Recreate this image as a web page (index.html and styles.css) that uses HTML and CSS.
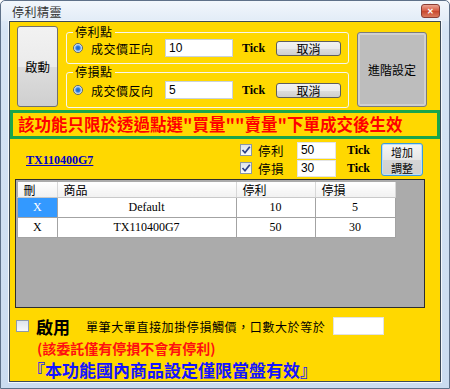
FILE: index.html
```
<!DOCTYPE html>
<html>
<head>
<meta charset="UTF-8">
<link rel="stylesheet" href="styles.css">
</head>
<body>
<div class="window">
	<div class="titlebar">
		<span class="title">停利精靈</span>
		<span class="close">&#x2715;</span>
	</div>
	<div class="client">
		<div class="top">
			<div class="btn btn-start">啟動</div>
			<div class="groups">
				<div class="group group-profit">
					<span class="legend">停利點</span>
					<span class="radio"></span>
					<span class="opt">成交價正向</span>
					<input class="box box-tick" type="text" value="10">
					<span class="tick">Tick</span>
					<div class="btn btn-cancel">取消</div>
				</div>
				<div class="group group-loss">
					<span class="legend">停損點</span>
					<span class="radio"></span>
					<span class="opt">成交價反向</span>
					<input class="box box-tick" type="text" value="5">
					<span class="tick">Tick</span>
					<div class="btn btn-cancel">取消</div>
				</div>
			</div>
			<div class="btn btn-adv">進階設定</div>
		</div>

		<div class="notice">該功能只限於透過點選"買量""賣量"下單成交後生效</div>

		<div class="adjust">
			<a class="prod" href="#">TX110400G7</a>
			<div class="checks">
				<div class="check-row">
					<span class="chk"><svg width="10" height="10" viewBox="0 0 10 10"><path d="M1.5 5 L4 7.8 L8.8 1.8" fill="none" stroke="#2b3f86" stroke-width="1.7"/></svg></span>
					<span class="chk-label">停利</span>
					<input class="box box-small" type="text" value="50">
					<span class="tick">Tick</span>
				</div>
				<div class="check-row">
					<span class="chk"><svg width="10" height="10" viewBox="0 0 10 10"><path d="M1.5 5 L4 7.8 L8.8 1.8" fill="none" stroke="#2b3f86" stroke-width="1.7"/></svg></span>
					<span class="chk-label">停損</span>
					<input class="box box-small" type="text" value="30">
					<span class="tick">Tick</span>
				</div>
			</div>
			<div class="btn btn-add"><span>增加</span><span>調整</span></div>
		</div>

		<div class="grid">
			<table>
				<tr>
					<th class="c-del">刪</th>
					<th class="c-prod">商品</th>
					<th class="c-num">停利</th>
					<th class="c-num2">停損</th>
				</tr>
				<tr>
					<td class="sel">X</td>
					<td>Default</td>
					<td>10</td>
					<td>5</td>
				</tr>
				<tr>
					<td>X</td>
					<td>TX110400G7</td>
					<td>50</td>
					<td>30</td>
				</tr>
			</table>
		</div>

		<div class="bottom">
			<div class="enable-row">
				<span class="chk chk-empty"></span>
				<span class="enable">啟用</span>
				<span class="enable-text">單筆大單直接加掛停損觸價，口數大於等於</span>
				<input class="box box-qty" type="text" value="">
			</div>
			<div class="warn">(該委託僅有停損不會有停利)</div>
			<div class="note">『本功能國內商品設定僅限當盤有效』</div>
		</div>
	</div>
</div>
</body>
</html>
```

FILE: styles.css
```
html, body {
	margin: 0;
	padding: 0;
	width: 450px;
	height: 389px;
	overflow: hidden;
	background: #ffffff;
}
body {
	font-family: "Noto Sans CJK TC", "Noto Sans", sans-serif;
	font-size: 12px;
	color: #000;
}
div.window {
	box-sizing: border-box;
	width: 450px;
	height: 389px;
	border: 1px solid #5e7189;
	border-radius: 5px 5px 0 0;
	background: linear-gradient(#e9f1fa, #d6e4f4 30px, #cbdcf0);
	display: flex;
	flex-direction: column;
}
div.titlebar {
	height: 20px;
	display: flex;
	align-items: center;
	padding-left: 11px;
	background: linear-gradient(#f2f7fc, #e2ecf7);
	border-radius: 5px 5px 0 0;
}
span.title {
	font-size: 12px;
	color: #333;
	letter-spacing: 0.5px;
}
span.close {
	margin-left: auto;
	margin-right: 9px;
	width: 17px;
	height: 12px;
	border: 1px solid #8a3d33;
	border-radius: 3px;
	background: linear-gradient(#eba493, #d5573e 50%, #c8452c 51%, #da7a5e);
	color: #fff;
	font-size: 8px;
	font-weight: bold;
	line-height: 12px;
	text-align: center;
}
div.client {
	box-sizing: border-box;
	margin: 0 8px;
	height: 361px;
	border: 1px solid #3d4a58;
	outline: 1px solid #f4f8fc;
	background: #ffd800;
	overflow: hidden;
}

/* top part */
div.top {
	display: flex;
	align-items: flex-start;
	height: 88px;
}
div.btn {
	box-sizing: border-box;
	border: 1px solid #707070;
	border-radius: 3px;
	background: linear-gradient(#f2f2f2, #ebebeb 50%, #dddddd 51%, #cfcfcf);
	display: flex;
	align-items: center;
	justify-content: center;
	text-align: center;
	font-size: 12px;
}
div.btn-start {
	margin: 4px 0 0 7px;
	width: 41px;
	height: 81px;
	font-size: 12.5px;
}
div.groups {
	margin-left: 8px;
	width: 283px;
	padding-top: 10px;
}
div.group {
	position: relative;
	box-sizing: border-box;
	border: 1px solid #f6f6f0;
	border-radius: 3px;
	display: flex;
	align-items: center;
	padding-left: 6px;
}
div.group-profit {
	height: 32px;
}
div.group-loss {
	margin-top: 8px;
	height: 36px;
}
span.legend {
	position: absolute;
	top: -9px;
	left: 6px;
	padding: 0 2px;
	background: #ffd800;
	font-size: 12px;
	line-height: 16px;
	letter-spacing: 0.5px;
}
span.radio {
	box-sizing: border-box;
	width: 10px;
	height: 10px;
	border-radius: 50%;
	border: 1px solid #55677c;
	background: radial-gradient(circle, #1c5fc4 0, #2f7fe0 2px, #9cc4ef 3px, #e8eff8 4px);
}
span.opt {
	margin-left: 8px;
	width: 63px;
	font-size: 12px;
	letter-spacing: 0.5px;
}
input.box {
	box-sizing: border-box;
	border: 1px solid #c9d2dc;
	background: #fff;
	font-family: "Liberation Sans", sans-serif;
	font-size: 12px;
	padding: 0 0 0 3px;
	margin: 0;
	outline: none;
}
input.box-tick {
	margin-left: 11px;
	width: 68px;
	height: 18px;
}
span.tick {
	font-family: "Liberation Serif", serif;
	font-weight: bold;
	font-size: 12px;
}
div.group span.tick {
	margin-left: 9px;
}
div.btn-cancel {
	margin-left: 11px;
	width: 65px;
	height: 15px;
	border-color: #5e5e5e;
}
div.btn-adv {
	margin: 10px 0 0 8px;
	width: 70px;
	height: 75px;
	border: 1px solid #7b7b7b;
	box-shadow: inset 0 0 0 2px #d0d0d0;
	background: #bdbdbd;
}

/* notice */
div.notice {
	box-sizing: border-box;
	height: 29px;
	border: 3px solid #19a54b;
	padding-left: 5px;
	color: #ff0000;
	font-weight: bold;
	font-size: 16.5px;
	line-height: 23px;
	white-space: nowrap;
}

/* adjust row */
div.adjust {
	display: flex;
	align-items: center;
	height: 40px;
}
a.prod {
	margin-left: 16px;
	margin-top: 2px;
	color: #0000c8;
	font-family: "Liberation Serif", serif;
	font-weight: bold;
	font-size: 12px;
}
div.checks {
	margin-left: auto;
	display: flex;
	flex-direction: column;
	gap: 1px;
}
div.check-row {
	display: flex;
	align-items: center;
	height: 17px;
}
span.chk {
	box-sizing: border-box;
	width: 12px;
	height: 12px;
	border: 1px solid #8a96a6;
	background: linear-gradient(#dde3ea, #fbfcfd);
	display: flex;
	align-items: center;
	justify-content: center;
}
span.chk-label {
	margin-left: 6px;
	width: 39px;
	font-size: 12.5px;
	letter-spacing: 0.5px;
}
input.box-small {
	width: 39px;
	height: 17px;
	border-color: #e4e4e4;
}
div.check-row span.tick {
	margin-left: 11px;
}
div.btn-add {
	margin: 1px 17px 0 11px;
	width: 42px;
	height: 33px;
	flex-direction: column;
	border: 1px solid #3d9bdc;
	box-shadow: inset 0 0 0 1px #bfe0f6;
	background: linear-gradient(#f6f6f6, #e6e6e6 50%, #d6d6d6 51%, #cfcfcf);
	font-size: 11px;
	line-height: 16px;
}

/* grid */
div.grid {
	box-sizing: border-box;
	margin-left: 5px;
	width: 410px;
	height: 129px;
	border: 1px solid #2e2e2e;
	background: #ababab;
	padding: 2px 0 0 1px;
}
table {
	border-collapse: collapse;
	font-size: 12px;
}
th {
	height: 15px;
	padding: 0 0 0 6px;
	text-align: left;
	font-weight: normal;
	line-height: 14px;
	background: linear-gradient(#ffffff, #f1f1f1);
	border-right: 1px solid #d8d8d8;
	border-bottom: 1px solid #c9c9c9;
}
th.c-del {
	width: 33px;
}
th.c-prod {
	width: 172px;
}
th.c-num {
	width: 72px;
}
th.c-num2 {
	width: 73px;
}
td {
	height: 19px;
	padding: 0;
	text-align: center;
	background: #fff;
	border: 1px solid #a3a3a3;
	font-family: "Liberation Serif", serif;
	font-size: 12px;
}
td.sel {
	background: #3399ff;
	color: #fff;
}

/* bottom */
div.bottom {
	padding-top: 9px;
}
div.enable-row {
	display: flex;
	align-items: center;
	height: 18px;
}
span.chk-empty {
	margin-left: 6px;
	width: 13px;
	height: 12px;
	border-color: #8f9aa8;
	background: linear-gradient(#dfe4ea, #f7f8fa);
}
span.enable {
	margin-left: 7px;
	font-size: 17px;
	font-weight: bold;
}
span.enable-text {
	margin-left: 16px;
	font-size: 12px;
	letter-spacing: 0.6px;
}
input.box-qty {
	margin-left: 8px;
	width: 51px;
	height: 18px;
	border-color: #e2e2e2;
}
div.warn {
	margin: 3px 0 0 27px;
	color: #ff1010;
	font-weight: bold;
	font-size: 14px;
	line-height: 20px;
}
div.note {
	margin: 1px 0 0 18px;
	color: #1414ff;
	font-weight: bold;
	font-size: 17px;
	line-height: 22px;
}
```
